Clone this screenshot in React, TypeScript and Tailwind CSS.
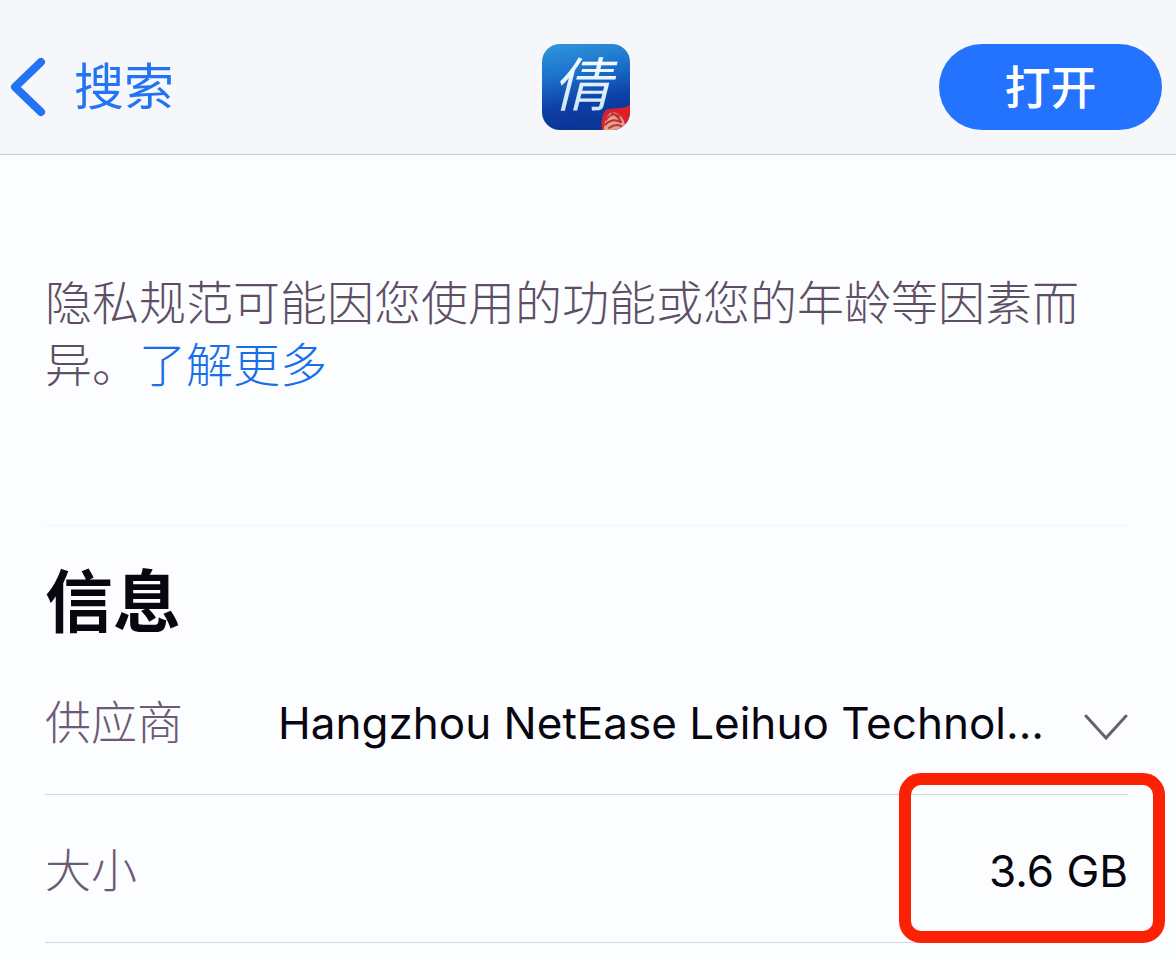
import React from "react";

const rows = [
  {
    label: "供应商",
    value: "Hangzhou NetEase Leihuo Technol...",
    expandable: true,
  },
  { label: "大小", value: "3.6 GB", highlighted: true },
];

function BackIcon() {
  return (
    <svg className="w-9 h-[60px]" viewBox="0 0 36 60" fill="none" aria-hidden="true">
      <path
        d="M31 5 5 30 31 55"
        stroke="currentColor"
        strokeWidth="8"
        strokeLinecap="round"
        strokeLinejoin="round"
      />
    </svg>
  );
}

function AppIcon() {
  return (
    <svg className="w-[88px] h-[86px]" viewBox="0 0 88 86" role="img" aria-label="倩">
      <defs>
        <linearGradient id="sky" x1="0" y1="0" x2="0.2" y2="1">
          <stop offset="0" stopColor="#2f98dc" />
          <stop offset="0.4" stopColor="#1b70cc" />
          <stop offset="0.75" stopColor="#0d3fa6" />
          <stop offset="1" stopColor="#0b3596" />
        </linearGradient>
        <linearGradient id="ink" x1="0" y1="0" x2="0" y2="1">
          <stop offset="0" stopColor="#ffffff" />
          <stop offset="1" stopColor="#c3e2f6" />
        </linearGradient>
        <clipPath id="tile">
          <rect width="88" height="86" rx="18" />
        </clipPath>
      </defs>
      <g clipPath="url(#tile)">
        <rect width="88" height="86" fill="url(#sky)" />
        <path d="M60 86c-1-9 0-16 4-20 5-2 9-1 13-2 4 0 8-1 11-3v25z" fill="#dc1f2b" />
        <path d="M62 86c0-8 2-15 8-18 8 1 12 7 13 13l-4 5z" fill="#e8a08c" />
        <path
          d="M64 76c3-5 8-7 13-4M63 81c4-5 10-6 15-3M67 84c4-3 8-4 12-2M70 69c4 2 7 4 9 9"
          stroke="#b8323a"
          strokeWidth="2"
          fill="none"
          strokeLinecap="round"
        />
        <text x="40" y="62" textAnchor="middle" className="text-[58px] italic" fill="url(#ink)">
          倩
        </text>
      </g>
    </svg>
  );
}

function ChevronIcon() {
  return (
    <svg className="w-11 h-7" viewBox="0 0 44 28" fill="none" aria-hidden="true">
      <path d="M2 3 22 25 42 3" stroke="currentColor" strokeWidth="3" strokeLinecap="round" />
    </svg>
  );
}

function App() {
  return (
    <div className="w-full min-h-screen bg-[#fcfdff] text-[#08060f] font-['Inter','Noto_Sans_CJK_SC',sans-serif]">
      <header className="grid grid-cols-3 items-center pt-11 pb-6 pl-[10px] pr-[14px] bg-[#f6f7fa] border-b border-[#c6c9d2]">
        <a href="#search" className="flex items-center gap-7 text-[#2274f5]">
          <BackIcon />
          <span className="text-[50px] leading-[60px]">搜索</span>
        </a>
        <div className="flex justify-center">
          <AppIcon />
        </div>
        <button className="justify-self-end w-[223px] h-[86px] rounded-full bg-[#2473ff] text-white text-[46px] font-medium">
          打开
        </button>
      </header>
      <main className="pl-[45px] pr-[48px]">
        <section className="pt-[117px] pb-[129px] border-b border-[#f4f5f8]">
          <p className="text-[47px] leading-[62px] font-light text-[#5e4f66]">
            隐私规范可能因您使用的功能或您的年龄等因素而异。
            <a href="#more" className="text-[#1a6fe8]">
              了解更多
            </a>
          </p>
        </section>
        <section>
          <h1 className="pt-9 text-[68px] leading-[80px] font-bold">信息</h1>
          <dl className="pt-[5px]">
            {rows.map((row) => (
              <div
                key={row.label}
                className="relative flex items-center justify-between h-[148px] pt-1 border-b border-[#d3d5de]"
              >
                <dt className="shrink-0 text-[46px] font-light text-[#6d5a76]">{row.label}</dt>
                <dd className="flex items-center gap-10 text-[44px] whitespace-nowrap">
                  {row.value}
                  {row.expandable && (
                    <button aria-label="展开" className="pt-2 text-[#69606f]">
                      <ChevronIcon />
                    </button>
                  )}
                </dd>
                {row.highlighted && (
                  <div className="absolute -right-[37px] -top-[22px] w-[266px] h-[170px] rounded-[22px] border-[12px] border-[#fb2204] pointer-events-none" />
                )}
              </div>
            ))}
          </dl>
        </section>
      </main>
    </div>
  );
}

export default App;
